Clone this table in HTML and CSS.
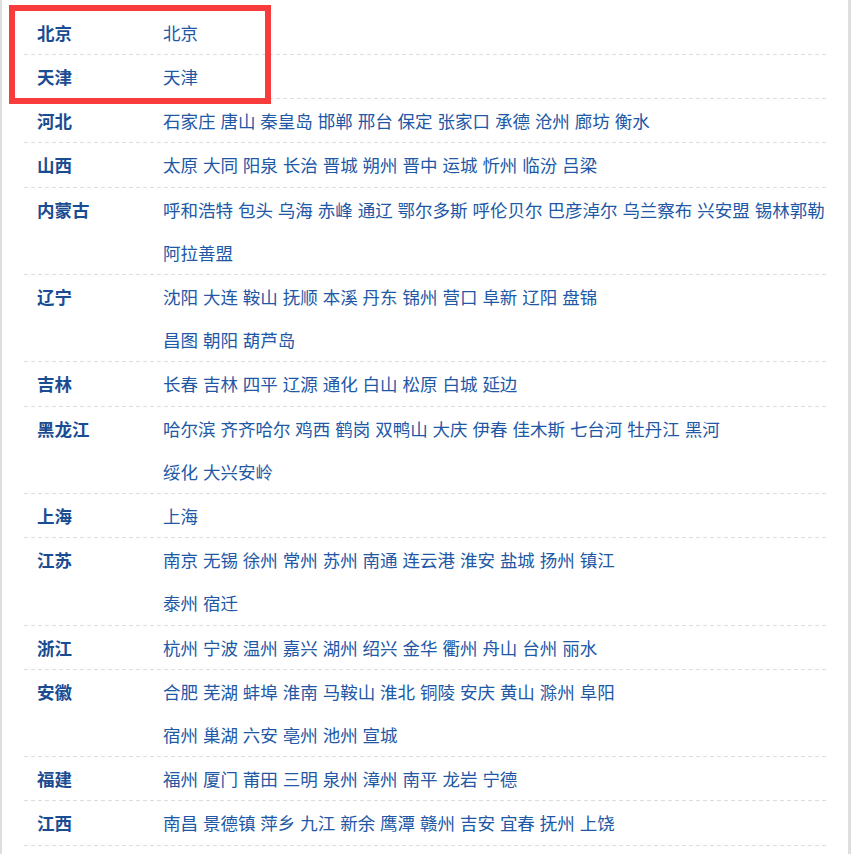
FILE: index.html
```html
<!DOCTYPE html>
<html lang="zh-CN">
<head>
    <meta charset="UTF-8">
    <meta name="viewport" content="width=device-width, initial-scale=1.0">
    <title>省市列表</title>
    <link rel="stylesheet" href="styles.css">
</head>
<body>
    <div class="page">
        <dl class="region-list">
            <div class="row"><dt>北京</dt><dd><p><a href="#">北京</a></p></dd></div>
            <div class="row"><dt>天津</dt><dd><p><a href="#">天津</a></p></dd></div>
            <div class="row"><dt>河北</dt><dd><p><a href="#">石家庄</a> <a href="#">唐山</a> <a href="#">秦皇岛</a> <a href="#">邯郸</a> <a href="#">邢台</a> <a href="#">保定</a> <a href="#">张家口</a> <a href="#">承德</a> <a href="#">沧州</a> <a href="#">廊坊</a> <a href="#">衡水</a></p></dd></div>
            <div class="row"><dt>山西</dt><dd><p><a href="#">太原</a> <a href="#">大同</a> <a href="#">阳泉</a> <a href="#">长治</a> <a href="#">晋城</a> <a href="#">朔州</a> <a href="#">晋中</a> <a href="#">运城</a> <a href="#">忻州</a> <a href="#">临汾</a> <a href="#">吕梁</a></p></dd></div>
            <div class="row"><dt>内蒙古</dt><dd><p><a href="#">呼和浩特</a> <a href="#">包头</a> <a href="#">乌海</a> <a href="#">赤峰</a> <a href="#">通辽</a> <a href="#">鄂尔多斯</a> <a href="#">呼伦贝尔</a> <a href="#">巴彦淖尔</a> <a href="#">乌兰察布</a> <a href="#">兴安盟</a> <a href="#">锡林郭勒</a></p><p><a href="#">阿拉善盟</a></p></dd></div>
            <div class="row"><dt>辽宁</dt><dd><p><a href="#">沈阳</a> <a href="#">大连</a> <a href="#">鞍山</a> <a href="#">抚顺</a> <a href="#">本溪</a> <a href="#">丹东</a> <a href="#">锦州</a> <a href="#">营口</a> <a href="#">阜新</a> <a href="#">辽阳</a> <a href="#">盘锦</a></p><p><a href="#">昌图</a> <a href="#">朝阳</a> <a href="#">葫芦岛</a></p></dd></div>
            <div class="row"><dt>吉林</dt><dd><p><a href="#">长春</a> <a href="#">吉林</a> <a href="#">四平</a> <a href="#">辽源</a> <a href="#">通化</a> <a href="#">白山</a> <a href="#">松原</a> <a href="#">白城</a> <a href="#">延边</a></p></dd></div>
            <div class="row"><dt>黑龙江</dt><dd><p><a href="#">哈尔滨</a> <a href="#">齐齐哈尔</a> <a href="#">鸡西</a> <a href="#">鹤岗</a> <a href="#">双鸭山</a> <a href="#">大庆</a> <a href="#">伊春</a> <a href="#">佳木斯</a> <a href="#">七台河</a> <a href="#">牡丹江</a> <a href="#">黑河</a></p><p><a href="#">绥化</a> <a href="#">大兴安岭</a></p></dd></div>
            <div class="row"><dt>上海</dt><dd><p><a href="#">上海</a></p></dd></div>
            <div class="row"><dt>江苏</dt><dd><p><a href="#">南京</a> <a href="#">无锡</a> <a href="#">徐州</a> <a href="#">常州</a> <a href="#">苏州</a> <a href="#">南通</a> <a href="#">连云港</a> <a href="#">淮安</a> <a href="#">盐城</a> <a href="#">扬州</a> <a href="#">镇江</a></p><p><a href="#">泰州</a> <a href="#">宿迁</a></p></dd></div>
            <div class="row"><dt>浙江</dt><dd><p><a href="#">杭州</a> <a href="#">宁波</a> <a href="#">温州</a> <a href="#">嘉兴</a> <a href="#">湖州</a> <a href="#">绍兴</a> <a href="#">金华</a> <a href="#">衢州</a> <a href="#">舟山</a> <a href="#">台州</a> <a href="#">丽水</a></p></dd></div>
            <div class="row"><dt>安徽</dt><dd><p><a href="#">合肥</a> <a href="#">芜湖</a> <a href="#">蚌埠</a> <a href="#">淮南</a> <a href="#">马鞍山</a> <a href="#">淮北</a> <a href="#">铜陵</a> <a href="#">安庆</a> <a href="#">黄山</a> <a href="#">滁州</a> <a href="#">阜阳</a></p><p><a href="#">宿州</a> <a href="#">巢湖</a> <a href="#">六安</a> <a href="#">亳州</a> <a href="#">池州</a> <a href="#">宣城</a></p></dd></div>
            <div class="row"><dt>福建</dt><dd><p><a href="#">福州</a> <a href="#">厦门</a> <a href="#">莆田</a> <a href="#">三明</a> <a href="#">泉州</a> <a href="#">漳州</a> <a href="#">南平</a> <a href="#">龙岩</a> <a href="#">宁德</a></p></dd></div>
            <div class="row"><dt>江西</dt><dd><p><a href="#">南昌</a> <a href="#">景德镇</a> <a href="#">萍乡</a> <a href="#">九江</a> <a href="#">新余</a> <a href="#">鹰潭</a> <a href="#">赣州</a> <a href="#">吉安</a> <a href="#">宜春</a> <a href="#">抚州</a> <a href="#">上饶</a></p></dd></div>
        </dl>
        <div class="highlight"></div>
    </div>
</body>
</html>
```

FILE: styles.css
```css
body {
    margin: 0;
    background-color: #fff;
    font-family: "Noto Sans CJK SC", "Noto Sans", sans-serif;
}
.page {
    position: relative;
    width: 851px;
    min-height: 854px;
    box-sizing: border-box;
    border-left: 2px solid #dedede;
    border-right: 3px solid #dedede;
    padding: 10.8px 22px 0 22px;
}
.region-list {
    margin: 0;
}
.row {
    display: flex;
    padding-bottom: 1px;
    background-image: linear-gradient(to right, #dddddd 4px, transparent 4px);
    background-size: 7px 1px;
    background-repeat: repeat-x;
    background-position: left bottom;
}
.row dt {
    width: 126px;
    padding-left: 13px;
    font-size: 17.5px;
    font-weight: bold;
    line-height: 43.2px;
    color: #1a4c92;
}
.row dd {
    flex: 1;
    margin: 0;
}
.row p {
    margin: 0;
    font-size: 17.5px;
    line-height: 43.2px;
    white-space: nowrap;
    word-spacing: 1px;
}
.row a {
    color: #2158a6;
    text-decoration: none;
}
.highlight {
    position: absolute;
    left: 7px;
    top: 5px;
    width: 250px;
    height: 87px;
    border: 6px solid #f83b3b;
}
```
